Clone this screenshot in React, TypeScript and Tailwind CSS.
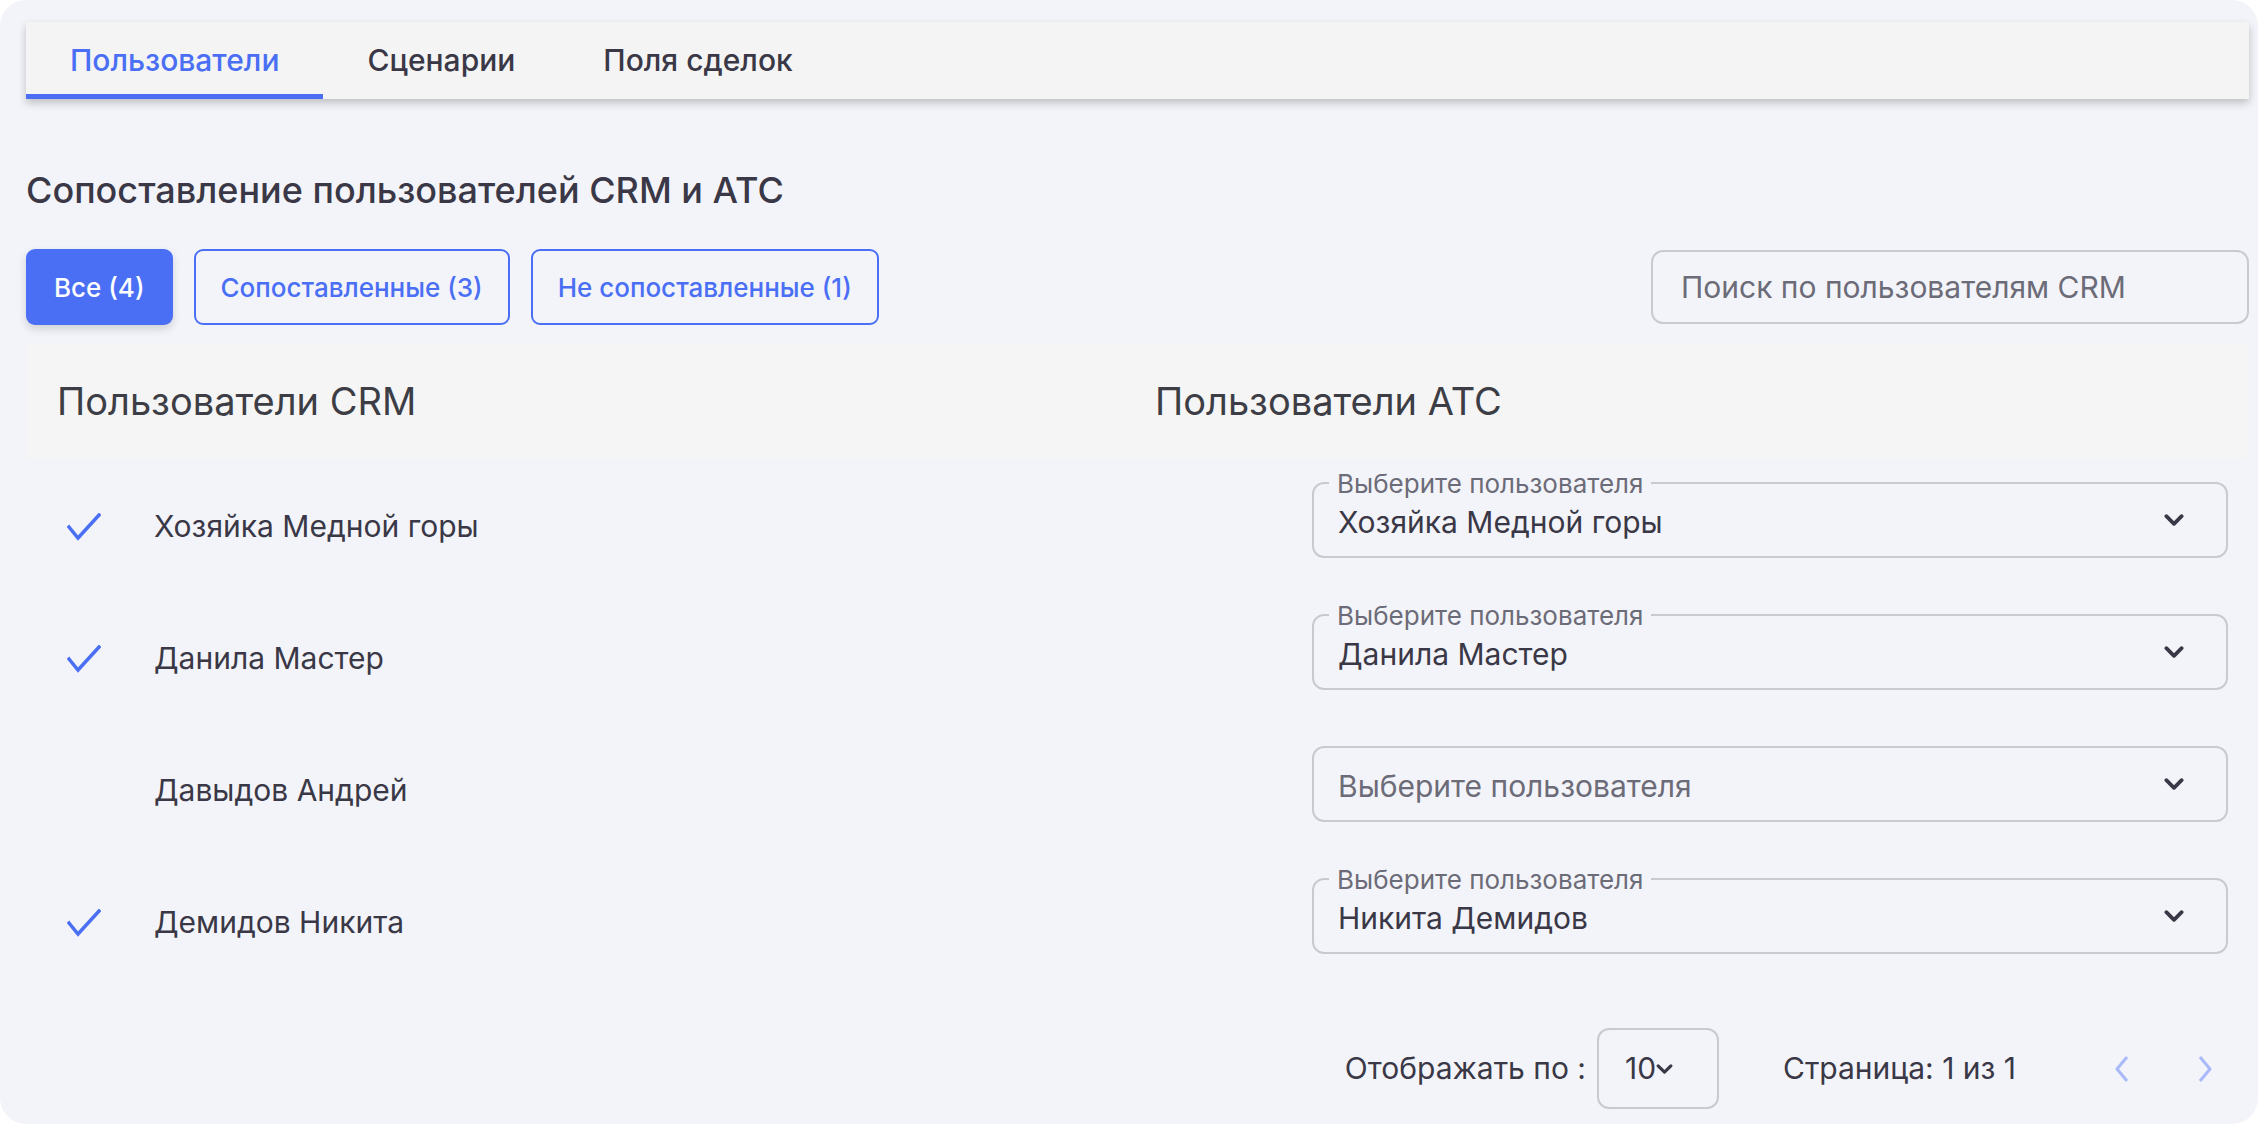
import React from 'react';

type Row = {
  crm: string;
  atc: string;
  matched: boolean;
};

const rows: Row[] = [
  { crm: 'Хозяйка Медной горы', atc: 'Хозяйка Медной горы', matched: true },
  { crm: 'Данила Мастер', atc: 'Данила Мастер', matched: true },
  { crm: 'Давыдов Андрей', atc: '', matched: false },
  { crm: 'Демидов Никита', atc: 'Никита Демидов', matched: true },
];

const Check = () => (
  <svg width="34" height="28" viewBox="0 0 34 28" fill="none">
    <polyline points="2,14 11,25 32,2" stroke="#4a6ff5" strokeWidth="3.5" strokeLinecap="square" />
  </svg>
);

const ChevronDown = ({ size = 20 }: { size?: number }) => (
  <svg width={size} height={Math.round(size * 0.6)} viewBox="0 0 18 11" fill="none">
    <polyline points="2,2 9,9 16,2" stroke="#3a3846" strokeWidth="3.4" strokeLinecap="round" strokeLinejoin="round" />
  </svg>
);

const UserSelect = ({ value }: { value: string }) => (
  <div className="relative mr-[21px] flex h-[76px] w-[916px] items-center rounded-[12px] border-2 border-[#c9cad1] pl-[24px] pr-[42px]">
    {value && (
      <span className="absolute left-[15px] top-[-15px] bg-[#f3f4f9] px-[8px] text-[26px] leading-[30px] text-[#6c6b78]">
        Выберите пользователя
      </span>
    )}
    <span className={`flex-1 pt-[4px] text-[30px] ${value ? 'text-[#3a3846]' : 'text-[#6c6b78]'}`}>
      {value || 'Выберите пользователя'}
    </span>
    <ChevronDown />
  </div>
);

export default function App() {
  return (
    <div className="min-h-screen bg-white font-['Inter','Noto_Sans',sans-serif]">
      <div className="flex h-[1124px] w-full flex-col overflow-hidden rounded-[26px] bg-[#f3f4f9] pl-[26px] pr-[9px] pt-[22px]">
        {/* вкладки */}
        <div className="flex h-[77px] items-stretch bg-[#f4f4f4] shadow-[0_4px_8px_rgba(0,0,0,0.22)]">
          <div className="flex items-center border-b-[5px] border-[#4a6ff5] px-[44px] pt-[5px] text-[30px] font-medium text-[#4a6ff5]">
            Пользователи
          </div>
          <div className="flex items-center px-[44px] text-[30px] font-medium text-[#3a3846]">Сценарии</div>
          <div className="flex items-center px-[44px] text-[30px] font-medium text-[#3a3846]">Поля сделок</div>
        </div>

        <h1 className="mt-[71px] h-[40px] text-[36px] font-medium leading-[40px] text-[#3a3846]">
          Сопоставление пользователей CRM и АТС
        </h1>

        {/* фильтры */}
        <div className="mt-[39px] flex h-[76px] items-center">
          <button className="h-full rounded-[9px] bg-[#4a6ff5] px-[28px] text-[26px] font-medium text-white shadow-[0_4px_8px_rgba(0,0,0,0.15)]">
            Все (4)
          </button>
          <button className="ml-[21px] h-full rounded-[9px] border-2 border-[#4a6ff5] px-[25px] text-[26px] font-medium text-[#4a6ff5]">
            Сопоставленные (3)
          </button>
          <button className="ml-[21px] h-full rounded-[9px] border-2 border-[#4a6ff5] px-[25px] text-[26px] font-medium text-[#4a6ff5]">
            Не сопоставленные (1)
          </button>
          <div className="ml-auto flex h-[74px] w-[598px] items-center rounded-[12px] border-2 border-[#c9cad1] pl-[28px] text-[30px] text-[#6c6b78]">
            Поиск по пользователям CRM
          </div>
        </div>

        {/* заголовок таблицы */}
        <div className="mt-[19px] flex h-[115px] items-center rounded-[6px] bg-[#f5f5f5] pl-[31px]">
          <div className="w-[1098px] text-[38px] text-[#3d3d45]">Пользователи CRM</div>
          <div className="text-[38px] text-[#3d3d45]">Пользователи АТС</div>
        </div>

        {/* строки */}
        <div className="mt-[23px] flex flex-col gap-[56px]">
          {rows.map((row) => (
            <div key={row.crm} className="flex h-[76px] items-center">
              <div className="mt-[13px] flex flex-1 items-center pl-[41px]">
                <div className="w-[34px]">{row.matched && <Check />}</div>
                <span className="ml-[53px] text-[30px] text-[#3a3846]">{row.crm}</span>
              </div>
              <UserSelect value={row.atc} />
            </div>
          ))}
        </div>

        {/* пагинация */}
        <div className="mt-[74px] flex h-[81px] items-center justify-end pr-[36px] text-[30px] text-[#3a3846]">
          <span>Отображать по :</span>
          <div className="ml-[11px] flex h-[81px] w-[122px] items-center rounded-[12px] border-2 border-[#c9cad1] pl-[26px]">
            <span>10</span>
            <ChevronDown size={17} />
          </div>
          <span className="ml-[64px]">Страница: 1 из 1</span>
          <svg className="ml-[98px]" width="16" height="28" viewBox="0 0 16 28" fill="none">
            <polyline points="13,2 3,14 13,26" stroke="#a9b9f9" strokeWidth="3" strokeLinejoin="round" />
          </svg>
          <svg className="ml-[67px]" width="16" height="28" viewBox="0 0 16 28" fill="none">
            <polyline points="3,2 13,14 3,26" stroke="#a9b9f9" strokeWidth="3" strokeLinejoin="round" />
          </svg>
        </div>
      </div>
    </div>
  );
}
